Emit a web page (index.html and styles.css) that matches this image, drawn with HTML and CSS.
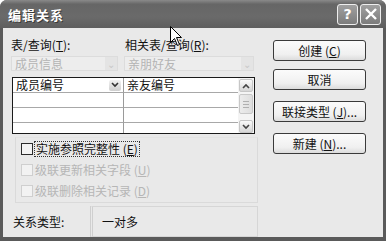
FILE: index.html
```html
<!DOCTYPE html>
<html lang="zh-CN">
<head>
    <meta charset="UTF-8">
    <title>编辑关系</title>
    <link rel="stylesheet" href="styles.css">
</head>
<body>
    <div class="window">
        <div class="titlebar">
            <span class="title">编辑关系</span>
            <div class="caption-buttons">
                <span class="cap-btn">?</span>
                <span class="cap-btn">
                    <svg width="12" height="12" viewBox="0 0 12 12"><path d="M1 1 L11 11 M11 1 L1 11" stroke="#fff" stroke-width="2.4"/></svg>
                </span>
            </div>
        </div>

        <div class="client">
            <div class="main">
                <div class="labels">
                    <span class="label-left">表/查询(<u>T</u>):</span>
                    <span>相关表/查询(<u>R</u>):</span>
                </div>

                <div class="combos">
                    <div class="combo combo-left">成员信息<span class="combo-drop">&#8964;</span></div>
                    <div class="combo combo-right">亲朋好友<span class="combo-drop">&#8964;</span></div>
                </div>

                <div class="grid">
                    <div class="cells">
                        <div class="cell first">成员编号<span class="cell-drop"><svg width="8" height="6" viewBox="0 0 8 6"><path d="M1 1 L4 4 L7 1" stroke="#333" stroke-width="1.6" fill="none"/></svg></span></div>
                        <div class="cell">亲友编号</div>
                        <div class="cell first"></div>
                        <div class="cell"></div>
                        <div class="cell first"></div>
                        <div class="cell"></div>
                        <div class="cell first last"></div>
                        <div class="cell last"></div>
                    </div>
                    <div class="scrollbar">
                        <span class="sb-btn"><svg width="8" height="6" viewBox="0 0 8 6"><path d="M1 5 L4 2 L7 5" stroke="#444" stroke-width="1.6" fill="none"/></svg></span>
                        <span class="sb-thumb"><i></i><i></i><i></i></span>
                        <span class="sb-space"></span>
                        <span class="sb-btn"><svg width="8" height="6" viewBox="0 0 8 6"><path d="M1 1 L4 4 L7 1" stroke="#444" stroke-width="1.6" fill="none"/></svg></span>
                    </div>
                </div>

                <div class="options">
                    <div class="check">
                        <span class="box"></span>
                        <span class="focus">实施参照完整性 (<u>E</u>)</span>
                    </div>
                    <div class="check disabled">
                        <span class="box"></span>
                        <span>级联更新相关字段 (<u>U</u>)</span>
                    </div>
                    <div class="check disabled">
                        <span class="box"></span>
                        <span>级联删除相关记录 (<u>D</u>)</span>
                    </div>
                </div>

                <div class="reltype">
                    <span class="rel-label">关系类型:</span>
                    <div class="rel-value">一对多</div>
                </div>
            </div>

            <div class="side">
                <button class="btn">创建 (<u>C</u>)</button>
                <button class="btn">取消</button>
                <button class="btn spaced">联接类型 (<u>J</u>)...</button>
                <button class="btn spaced">新建 (<u>N</u>)...</button>
            </div>
        </div>

        <svg class="cursor" width="13" height="21" viewBox="0 0 13 21">
            <path d="M0.5 0.5 L0.5 16.5 L4.5 12.5 L7.5 19.5 L9.5 18.5 L6.5 11.5 L11.5 11.5 Z" fill="#fff" stroke="#000" stroke-width="1"/>
        </svg>
    </div>
</body>
</html>
```

FILE: styles.css
```css
* {
    box-sizing: border-box;
}
body {
    margin: 0;
    font-family: "Noto Sans CJK SC", sans-serif;
    font-size: 12px;
    color: #111;
}
.window {
    position: relative;
    width: 386px;
    height: 241px;
    display: flex;
    flex-direction: column;
    background-color: #5a5a5a;
    border-radius: 7px 7px 0 0;
    overflow: hidden;
}
.titlebar {
    height: 28px;
    flex: none;
    display: flex;
    align-items: center;
    justify-content: space-between;
    padding: 0 5px 0 8px;
    background: linear-gradient(#8a8a8a, #666 15%, #6a6a6a 60%, #5e5e5e);
}
.title {
    color: #fff;
    font-weight: bold;
    font-size: 13px;
    letter-spacing: 1px;
    text-shadow: 1px 1px #3a3a3a;
}
.caption-buttons {
    display: flex;
    gap: 2px;
}
.cap-btn {
    width: 21px;
    height: 21px;
    display: flex;
    align-items: center;
    justify-content: center;
    border: 1px solid #eee;
    border-radius: 3px;
    background: linear-gradient(#a0a0a0, #7c7c7c);
    color: #fff;
    font-family: "DejaVu Sans", sans-serif;
    font-weight: bold;
    font-size: 14px;
}
.client {
    flex: 1;
    margin: 0 3px 4px;
    display: flex;
    background-color: #e9e9e9;
}
.main {
    width: 258px;
    padding: 9px 0 0 8px;
    display: flex;
    flex-direction: column;
}
.labels {
    display: flex;
    height: 15px;
    line-height: 15px;
}
.label-left {
    width: 114px;
}
.combos {
    display: flex;
    gap: 6px;
    margin-top: 4px;
}
.combo {
    height: 15px;
    line-height: 13px;
    padding-left: 3px;
    display: flex;
    justify-content: space-between;
    border: 1px solid #dcdcdc;
    background-color: #ededed;
    color: #b4b4b4;
}
.combo-left {
    width: 107px;
}
.combo-right {
    width: 130px;
}
.combo-drop {
    width: 12px;
    text-align: center;
    font-size: 10px;
    color: #c8c8c8;
    background-color: #e4e4e4;
}
.grid {
    display: flex;
    width: 243px;
    height: 57px;
    margin: 6px 0 0 1px;
    border: 1px solid #1a1a1a;
    background-color: #fff;
}
.cells {
    flex: 1;
    display: grid;
    grid-template-columns: 111px 1fr;
    grid-template-rows: 15px 15px 15px 10px;
}
.cell {
    display: flex;
    justify-content: space-between;
    align-items: center;
    padding-left: 3px;
    line-height: 14px;
    border-bottom: 1px solid #a8a8a8;
}
.cell.first {
    border-right: 1px solid #9a9a9a;
}
.cell.last {
    border-bottom: none;
}
.cell-drop {
    width: 12px;
    height: 11px;
    margin-right: 2px;
    display: flex;
    align-items: center;
    justify-content: center;
    background: linear-gradient(#f2f2f2, #cfcfcf);
    border-radius: 2px;
}
.scrollbar {
    width: 16px;
    display: flex;
    flex-direction: column;
    background-color: #f4f4f4;
    padding: 1px 1px 0;
}
.sb-btn {
    height: 13px;
    display: flex;
    align-items: center;
    justify-content: center;
    background: linear-gradient(#fafafa, #d6d6d6);
    border: 1px solid #c6c6c6;
    border-radius: 2px;
}
.sb-thumb {
    height: 20px;
    margin-top: 2px;
    display: flex;
    flex-direction: column;
    justify-content: center;
    gap: 2px;
    padding: 0 3px;
    background: linear-gradient(90deg, #ececec, #dedede);
    border: 1px solid #c8c8c8;
    border-radius: 2px;
}
.sb-thumb i {
    height: 1px;
    background-color: #b0b0b0;
}
.sb-space {
    flex: 1;
}
.options {
    margin: 3px 0 0 4px;
    width: 243px;
    height: 66px;
    padding: 0 0 0 5px;
    border: 1px solid #dadada;
    border-top-color: #e4e4e4;
}
.check {
    height: 21px;
    display: flex;
    align-items: center;
    gap: 2px;
}
.box {
    width: 12px;
    height: 12px;
    border: 1px solid #2c2c2c;
    background-color: #f4f4f4;
}
.focus {
    padding: 0 1px;
    outline: 1px dotted #333;
    line-height: 14px;
}
.check.disabled {
    color: #b6b6b6;
}
.check.disabled .box {
    border-color: #cfcfcf;
    background-color: #f2f2f2;
}
.reltype {
    display: flex;
    align-items: stretch;
    margin-top: 3px;
    height: 31px;
}
.rel-label {
    width: 79px;
    padding-left: 2px;
    display: flex;
    align-items: center;
}
.rel-value {
    width: 168px;
    padding-left: 9px;
    display: flex;
    align-items: center;
    border: 1px solid #d6d6d6;
    border-left: 3px double #cfcfcf;
}
.side {
    width: 93px;
    margin-left: 12px;
    padding-top: 12px;
    display: flex;
    flex-direction: column;
    gap: 8px;
}
.btn {
    height: 21px;
    padding: 0;
    font-family: inherit;
    font-size: 12px;
    color: #111;
    border: 1px solid #3a3a3a;
    border-radius: 3px;
    background: linear-gradient(#fbfbfb, #f0f0f0 70%, #dcdcdc);
}
.btn.spaced {
    margin-top: 3px;
}
.cursor {
    position: absolute;
    left: 170px;
    top: 26px;
}
```
